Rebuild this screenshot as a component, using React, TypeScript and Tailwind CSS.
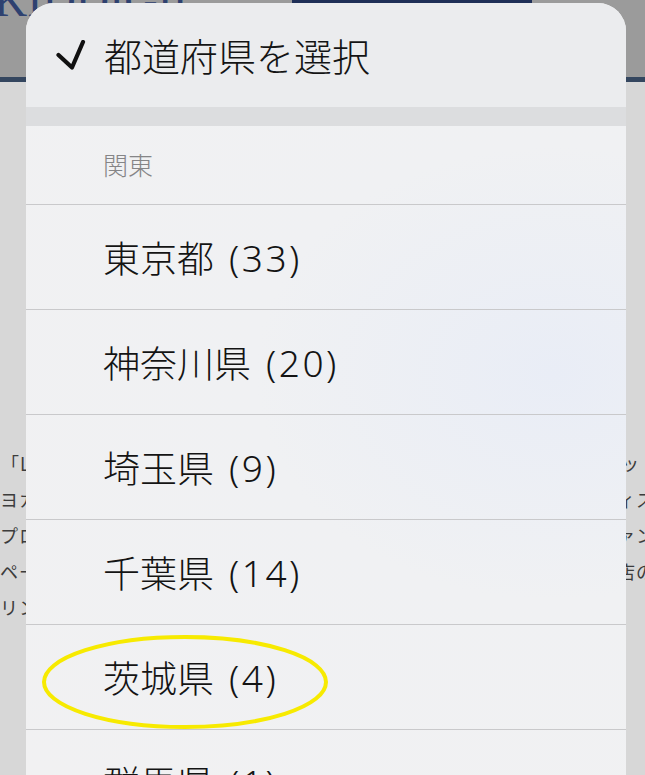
import React from "react";

const rows: [string, string][] = [
  ["東京都", "(33)"],
  ["神奈川県", "(20)"],
  ["埼玉県", "(9)"],
  ["千葉県", "(14)"],
  ["茨城県", "(4)"],
  ["群馬県", "(1)"],
];

export default function App() {
  return (
    <div
      className="relative w-[645px] h-[775px] overflow-hidden bg-[#d7d7d7]"
      style={{ fontFamily: '"Noto Sans CJK JP", "Noto Sans", sans-serif' }}
    >
      {/* background page */}
      <header className="h-[82px] bg-[#9b9b9b] border-b-[5px] border-[#34465f] flex items-start">
        <div
          className="mt-[-22px] ml-[-6px] text-[46px] leading-none text-[#2e4170] w-[290px]"
          style={{ fontFamily: '"Liberation Serif", serif' }}
        >
          KIDDIGIL
        </div>
        <div className="ml-[8px] w-[240px] h-[6px] bg-[#1f2f57]" />
      </header>
      <div className="pt-[363px] text-[18px] leading-[36px] text-[#3c3c3c] tracking-[1px]">
        <div className="flex justify-between h-[36px]">
          <span className="ml-[1px]">「L</span>
          <span className="mr-[5px]">ッ</span>
        </div>
        <div className="flex justify-between h-[36px]">
          <span>ヨカ</span>
          <span className="mr-[-10px]">ィス</span>
        </div>
        <div className="flex justify-between h-[36px]">
          <span>プロ</span>
          <span className="mr-[-10px]">ァン</span>
        </div>
        <div className="flex justify-between h-[36px]">
          <span>ペー</span>
          <span className="mr-[-10px]">店の</span>
        </div>
        <div className="flex justify-between h-[36px]">
          <span>リン</span>
          <span />
        </div>
      </div>

      {/* popup menu */}
      <div className="absolute left-[26px] top-[3px] w-[600px] bottom-0 rounded-t-[28px] overflow-hidden bg-[radial-gradient(ellipse_at_88%_48%,#e9edf6_0%,#f0f1f3_40%,#f1f1f2_100%)] flex flex-col">
        <div className="h-[104px] shrink-0 flex items-center pl-[30px] bg-[#ebecee]">
          <svg width="30" height="30" viewBox="0 0 30 30" className="shrink-0">
            <polyline
              points="2.5,15 16,27.5 27,2"
              fill="none"
              stroke="#111"
              strokeWidth="4.2"
              strokeLinecap="round"
              strokeLinejoin="round"
            />
          </svg>
          <span className="ml-[18px] text-[38px] leading-none font-light text-[#141414]">都道府県を選択</span>
        </div>
        <div className="h-[19px] shrink-0 bg-[#dcdddf]" />
        <div className="h-[79px] shrink-0 flex items-center pl-[77px] border-b border-[#c9c9cb] text-[25px] font-light text-[#858587]">
          関東
        </div>
        {rows.map(([name, count]) => (
          <div
            key={name}
            className="h-[105px] shrink-0 flex items-center pl-[77px] border-b border-[#c9c9cb] text-[37px] leading-none font-light text-[#141414]"
          >
            <span>{name}</span>
            <span
              className="ml-[15px] tracking-[2.5px] font-light"
              style={{ fontFamily: '"Noto Sans", "Noto Sans CJK JP", sans-serif' }}
            >
              {count}
            </span>
          </div>
        ))}
      </div>

      {/* yellow annotation */}
      <svg className="absolute left-0 top-0 pointer-events-none" width="645" height="775">
        <ellipse cx="185" cy="682" rx="141" ry="45" fill="none" stroke="#f7ea00" strokeWidth="4" />
      </svg>
    </div>
  );
}
